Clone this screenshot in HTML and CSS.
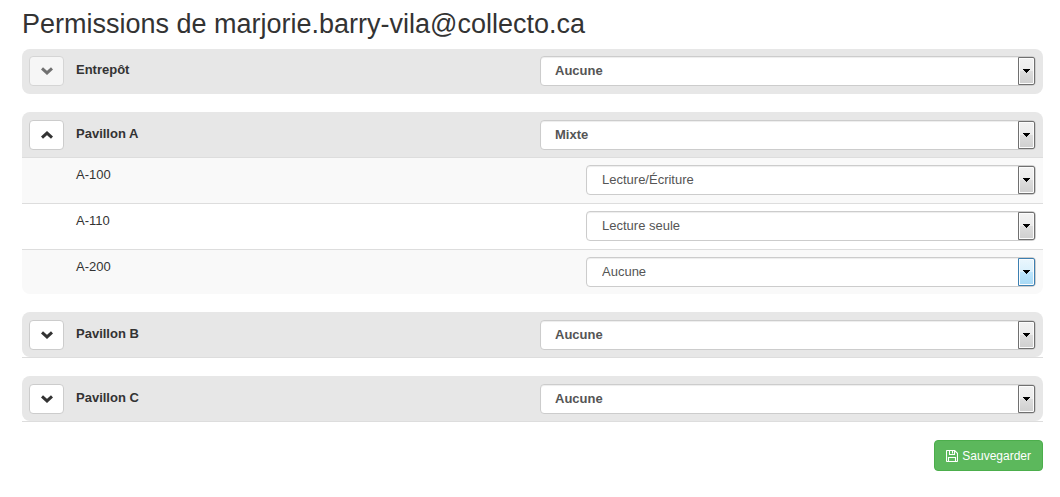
FILE: index.html
```html
<!DOCTYPE html>
<html lang="fr">
<head>
<meta charset="utf-8">
<meta name="viewport" content="width=device-width, initial-scale=1">
<title>Permissions</title>
<link rel="stylesheet" href="styles.css">
</head>
<body>
<svg class="sprite" aria-hidden="true">
  <symbol id="chevron-down" viewBox="0 0 12 8"><path d="M1 1.4 L6 5.9 L11 1.4" fill="none" stroke="currentColor" stroke-width="3"/></symbol>
  <symbol id="chevron-up" viewBox="0 0 12 8"><path d="M1 6.6 L6 2.1 L11 6.6" fill="none" stroke="currentColor" stroke-width="3"/></symbol>
  <symbol id="arrow" viewBox="0 0 7 4"><path d="M0 0H7V1H6V2H5V3H4V4H3V3H2V2H1V1H0Z" fill="#000" shape-rendering="crispEdges"/></symbol>
</svg>
<main class="page">
  <h1 class="title">Permissions de marjorie.barry-vila@collecto.ca</h1>
  <form class="permissions">
    <section class="group">
      <div class="row row-head">
        <div class="name">
          <button type="button" class="toggle" aria-label="Déplier Entrepôt" disabled><svg class="chevron"><use href="#chevron-down"/></svg></button>
          <label for="entrepot">Entrepôt</label>
        </div>
        <div class="field">
          <select id="entrepot" class="select"><option>Aucune</option><option>Lecture seule</option><option>Lecture/Écriture</option></select>
          <span class="drop"><svg class="arrow"><use href="#arrow"/></svg></span>
        </div>
      </div>
    </section>

    <section class="group">
      <div class="row row-head row-lined">
        <div class="name">
          <button type="button" class="toggle" aria-label="Replier Pavillon A" aria-expanded="true"><svg class="chevron"><use href="#chevron-up"/></svg></button>
          <label for="pavillon-a">Pavillon A</label>
        </div>
        <div class="field">
          <select id="pavillon-a" class="select"><option>Mixte</option><option>Aucune</option><option>Lecture seule</option><option>Lecture/Écriture</option></select>
          <span class="drop"><svg class="arrow"><use href="#arrow"/></svg></span>
        </div>
      </div>
      <div class="row row-child row-shaded row-lined">
        <div class="name"><label for="a-100">A-100</label></div>
        <div class="field">
          <select id="a-100" class="select"><option>Lecture/Écriture</option><option>Lecture seule</option><option>Aucune</option></select>
          <span class="drop"><svg class="arrow"><use href="#arrow"/></svg></span>
        </div>
      </div>
      <div class="row row-child row-lined">
        <div class="name"><label for="a-110">A-110</label></div>
        <div class="field">
          <select id="a-110" class="select"><option>Lecture seule</option><option>Lecture/Écriture</option><option>Aucune</option></select>
          <span class="drop"><svg class="arrow"><use href="#arrow"/></svg></span>
        </div>
      </div>
      <div class="row row-child row-shaded row-last">
        <div class="name"><label for="a-200">A-200</label></div>
        <div class="field">
          <select id="a-200" class="select"><option>Aucune</option><option>Lecture seule</option><option>Lecture/Écriture</option></select>
          <span class="drop drop-hot"><svg class="arrow"><use href="#arrow"/></svg></span>
        </div>
      </div>
    </section>

    <section class="group group-closed">
      <div class="row row-head">
        <div class="name">
          <button type="button" class="toggle" aria-label="Déplier Pavillon B" aria-expanded="false"><svg class="chevron"><use href="#chevron-down"/></svg></button>
          <label for="pavillon-b">Pavillon B</label>
        </div>
        <div class="field">
          <select id="pavillon-b" class="select"><option>Aucune</option><option>Lecture seule</option><option>Lecture/Écriture</option></select>
          <span class="drop"><svg class="arrow"><use href="#arrow"/></svg></span>
        </div>
      </div>
    </section>

    <section class="group group-closed">
      <div class="row row-head">
        <div class="name">
          <button type="button" class="toggle" aria-label="Déplier Pavillon C" aria-expanded="false"><svg class="chevron"><use href="#chevron-down"/></svg></button>
          <label for="pavillon-c">Pavillon C</label>
        </div>
        <div class="field">
          <select id="pavillon-c" class="select"><option>Aucune</option><option>Lecture seule</option><option>Lecture/Écriture</option></select>
          <span class="drop"><svg class="arrow"><use href="#arrow"/></svg></span>
        </div>
      </div>
    </section>

    <button type="submit" class="save">
      <svg class="floppy" viewBox="0 0 12 12" aria-hidden="true"><path d="M.5 1.2Q.5.5 1.2.5H8.6L11.5 3.4V10.8Q11.5 11.5 10.8 11.5H1.2Q.5 11.5.5 10.8ZM3.5 .5V4.5H8.5V.5M6.5 1V3.5M2.5 11.5V7.5H9.5V11.5" fill="none" stroke="currentColor" stroke-width="1.1"/></svg>
      Sauvegarder
    </button>
  </form>
</main>
</body>
</html>
```
FILE: styles.css
```css
* {
  box-sizing: border-box;
}

body {
  margin: 0;
  background: #fff;
  color: #333;
  font: 13px/18px "Liberation Sans", Arial, sans-serif;
}

.sprite {
  position: absolute;
  width: 0;
  height: 0;
}

.page {
  padding: 9px 17px 24px 22px;
}

.title {
  margin: 0 0 9px;
  font-size: 27px;
  font-weight: 400;
  line-height: 31px;
}

.permissions {
  display: flex;
  flex-direction: column;
  gap: 18px;
}

.group-closed {
  border-bottom: 1px solid #ddd;
}

.row {
  display: grid;
  grid-template-columns: 1fr 1fr;
  column-gap: 15px;
  padding: 7px 7px 8px;
}

.row-head {
  background: #e7e7e7;
  border-radius: 8px;
  font-weight: 700;
}

.row-lined {
  border-bottom: 1px solid #ddd;
  border-radius: 0;
}

.row-head.row-lined {
  padding: 8px 7px 7px;
  border-radius: 8px 8px 0 0;
}

.group-closed .row-head {
  padding: 8px 7px 7px;
}

.row-shaded {
  background: #f9f9f9;
}

.row-last {
  padding-bottom: 7px;
  border-radius: 0 0 8px 8px;
}

.name {
  display: flex;
  align-items: flex-start;
  gap: 12px;
}

.name label {
  padding-top: 5px;
}

.row-child .name {
  padding-left: 47px;
}

.row-child .name label {
  padding-top: 1px;
}

.toggle {
  display: flex;
  align-items: center;
  justify-content: center;
  width: 35px;
  height: 30px;
  padding: 0;
  border: 1px solid #ccc;
  border-radius: 4px;
  background: #fff;
  color: #333;
}

.toggle:disabled {
  opacity: .65;
}

.chevron {
  width: 12px;
  height: 8px;
}

.field {
  position: relative;
}

.row-child .field {
  margin-left: 46px;
}

.select {
  display: block;
  width: 100%;
  height: 30px;
  padding: 0 32px 0 14px;
  border: 1px solid #ccc;
  border-radius: 4px;
  background: #fff;
  box-shadow: inset 0 1px 1px rgba(0, 0, 0, .075);
  color: #555;
  font: inherit;
  appearance: none;
}

.row-child .select {
  padding-left: 15px;
}

.drop {
  position: absolute;
  top: 1px;
  right: 1px;
  bottom: 1px;
  display: flex;
  align-items: center;
  justify-content: center;
  width: 17px;
  border: 1px solid #707070;
  border-radius: 0 2px 2px 0;
  background: linear-gradient(#f2f2f2, #ebebeb 50%, #ddd 50%, #cfcfcf);
  box-shadow: inset 0 0 0 1px #fcfcfc;
  pointer-events: none;
}

.drop-hot {
  border-color: #3c7fb1;
  background: linear-gradient(#eaf6fd, #d9f0fc 50%, #bee6fd 50%, #a7d9f5);
}

.arrow {
  width: 7px;
  height: 4px;
}

.save {
  display: flex;
  align-items: center;
  align-self: flex-end;
  gap: 4px;
  height: 31px;
  padding: 0 11px;
  border: 1px solid #4cae4c;
  border-radius: 4px;
  background: #5cb85c;
  color: #fff;
  font: inherit;
  font-size: 12px;
}

.floppy {
  width: 12px;
  height: 12px;
}
```
